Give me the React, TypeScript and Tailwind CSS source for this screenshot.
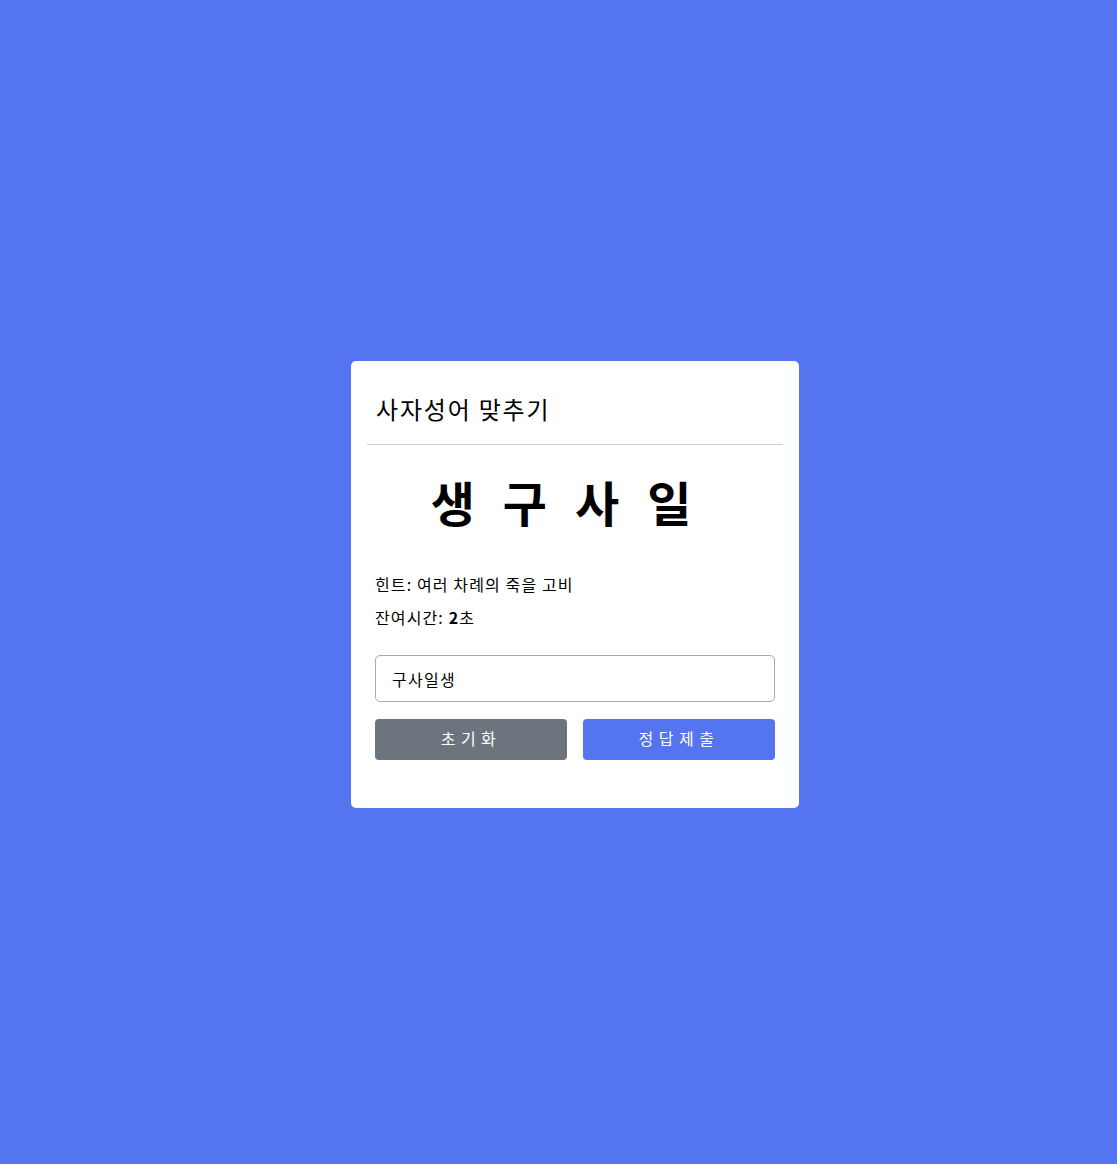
import React from "react";

export default function App() {
  return (
    <div
      className="w-full min-h-[1164px] bg-[#5574ef] flex items-center justify-center pl-[33px] pt-[5px]"
      style={{ fontFamily: '"Noto Sans CJK KR", "Noto Sans", sans-serif' }}
    >
      <div className="w-[448px] bg-white rounded-[5px] p-4 pb-12">
        <div className="border-b border-[#cccccc] px-[9px] pt-[14px] pb-[17px]">
          <h1 className="text-[24px] leading-[36px] text-black tracking-[0.075em]">사자성어 맞추기</h1>
        </div>
        <div className="px-2">
          <div className="mt-[32px] text-center text-[48px] leading-none font-bold tracking-[28px] text-black">
            생구사일
          </div>
          <p className="mt-[47px] text-[16px] leading-[24px] text-black tracking-[0.07em]">힌트: 여러 차례의 죽을 고비</p>
          <p className="mt-[9px] text-[16px] leading-[24px] text-black tracking-[0.07em]">
            잔여시간: <b>2</b>초
          </p>
          <input
            defaultValue="구사일생"
            className="mt-[26px] w-full h-[47px] border border-[#aaaaaa] rounded-[5px] px-4 text-[16px] text-black outline-none tracking-[0.08em]"
          />
          <div className="mt-[17px] grid grid-cols-2 gap-4">
            <button className="h-[41px] rounded-[4px] bg-[#6c757d] text-white text-[16px] tracking-[5.5px] pb-[3px]">
              초기화
            </button>
            <button className="h-[41px] rounded-[4px] bg-[#5574ef] text-white text-[16px] tracking-[5.5px] pb-[3px]">
              정답제출
            </button>
          </div>
        </div>
      </div>
    </div>
  );
}
